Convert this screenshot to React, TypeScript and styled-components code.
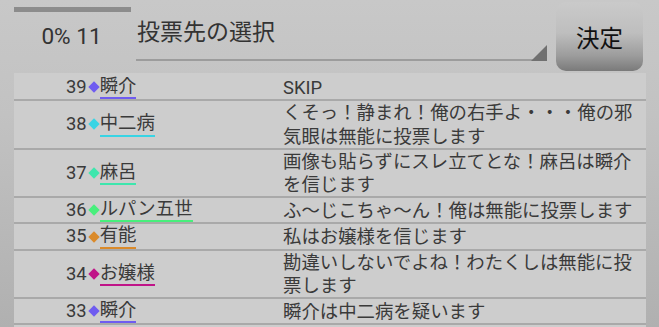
import styled, { createGlobalStyle } from 'styled-components';

const GlobalStyle = createGlobalStyle`
	html, body {
		margin: 0;
		padding: 0;
		width: 659px;
		height: 327px;
		overflow: hidden;
	}
	body {
		font-family: Roboto, 'Noto Sans CJK JP', sans-serif;
		color: #3a3a3a;
		background: linear-gradient(180deg, #c8c8c8 0%, #c2c2c2 35%, #b0b0b0 100%);
	}
`;

const Screen = styled.div`
	width: 659px;
	height: 327px;
	padding: 0 13px 0 14px;
	box-sizing: border-box;
	display: flex;
	flex-direction: column;
`;

const Header = styled.div`
	display: flex;
	align-items: flex-start;
	flex-shrink: 0;
	height: 69px;
	padding-top: 2px;
	margin-bottom: 2px;
`;

const Progress = styled.div`
	width: 117px;
	display: flex;
	flex-direction: column;
	align-items: center;
`;

const ProgressBar = styled.div`
	width: 100%;
	height: 5px;
	margin-top: 5px;
	background: #8c8c8c;
`;

const ProgressText = styled.div`
	margin-top: 12px;
	margin-right: 2px;
	font-size: 22.6px;
	line-height: 26px;
	color: #333;
`;

const Spinner = styled.div`
	position: relative;
	width: 411px;
	height: 59px;
	margin-left: 5px;
	padding: 16px 0 0 1px;
	box-sizing: border-box;
	border-bottom: 2px solid #9c9c9c;
	font-size: 23px;
	line-height: 30px;
	color: #333;
`;

const SpinnerArrow = styled.span`
	position: absolute;
	right: 0;
	bottom: -2px;
	width: 16px;
	height: 16px;
	background: #707070;
	clip-path: polygon(100% 0, 100% 100%, 0 100%);
`;

const DecideButton = styled.button`
	width: 87px;
	height: 69px;
	margin-left: 9px;
	border: none;
	border-radius: 10px;
	background: linear-gradient(180deg, #cacaca 0%, #bebebe 45%, #9c9c9c 78%, #7a7a7a 100%);
	font-family: Roboto, 'Noto Sans CJK JP', sans-serif;
	font-size: 23.5px;
	color: #111;
	padding: 0;
	cursor: pointer;
`;

const List = styled.div`
	flex: 1;
	display: flex;
	flex-direction: column;
	padding-top: 2px;
	background: #cdcdcd;
`;

const Row = styled.div`
	display: flex;
	align-items: center;
	min-height: 24.3px;
	border-bottom: 2px solid #a9a9a9;
`;

const Voter = styled.div`
	width: 269px;
	flex-shrink: 0;
	box-sizing: border-box;
	padding-left: 52px;
	display: flex;
	align-items: center;
	font-size: 18.4px;
`;

const Num = styled.span`
	line-height: 22.3px;
`;

const Diamond = styled.span<{ $color: string }>`
	display: inline-block;
	width: 8px;
	height: 8px;
	margin: 0 2px 0 3px;
	background: ${p => p.$color};
	transform: rotate(45deg);
`;

const Name = styled.span<{ $color: string }>`
	line-height: 22.3px;
	border-bottom: 2px solid ${p => p.$color};
`;

const Message = styled.div`
	flex: 1;
	font-size: 18.4px;
	line-height: 23.2px;
`;

const rows = [
	{ no: 39, name: '瞬介', color: '#6f5cf0', msg: 'SKIP' },
	{ no: 38, name: '中二病', color: '#38d4e4', msg: 'くそっ！静まれ！俺の右手よ・・・俺の邪気眼は無能に投票します' },
	{ no: 37, name: '麻呂', color: '#3ee6ad', msg: '画像も貼らずにスレ立てとな！麻呂は瞬介を信じます' },
	{ no: 36, name: 'ルパン五世', color: '#48ef7c', msg: 'ふ〜じこちゃ〜ん！俺は無能に投票します' },
	{ no: 35, name: '有能', color: '#da8a2a', msg: '私はお嬢様を信じます' },
	{ no: 34, name: 'お嬢様', color: '#c01488', msg: '勘違いしないでよね！わたくしは無能に投票します' },
	{ no: 33, name: '瞬介', color: '#6f5cf0', msg: '瞬介は中二病を疑います' },
];

const App = () => {
	return (
		<>
			<GlobalStyle />
			<Screen>
				<Header>
					<Progress>
						<ProgressBar />
						<ProgressText>0% 11</ProgressText>
					</Progress>
					<Spinner>
						投票先の選択
						<SpinnerArrow />
					</Spinner>
					<DecideButton>決定</DecideButton>
				</Header>
				<List>
					{rows.map((r, i) => (
						<Row key={i}>
							<Voter>
								<Num>{r.no}</Num>
								<Diamond $color={r.color} />
								<Name $color={r.color}>{r.name}</Name>
							</Voter>
							<Message>{r.msg}</Message>
						</Row>
					))}
				</List>
			</Screen>
		</>
	);
};

export default App;
